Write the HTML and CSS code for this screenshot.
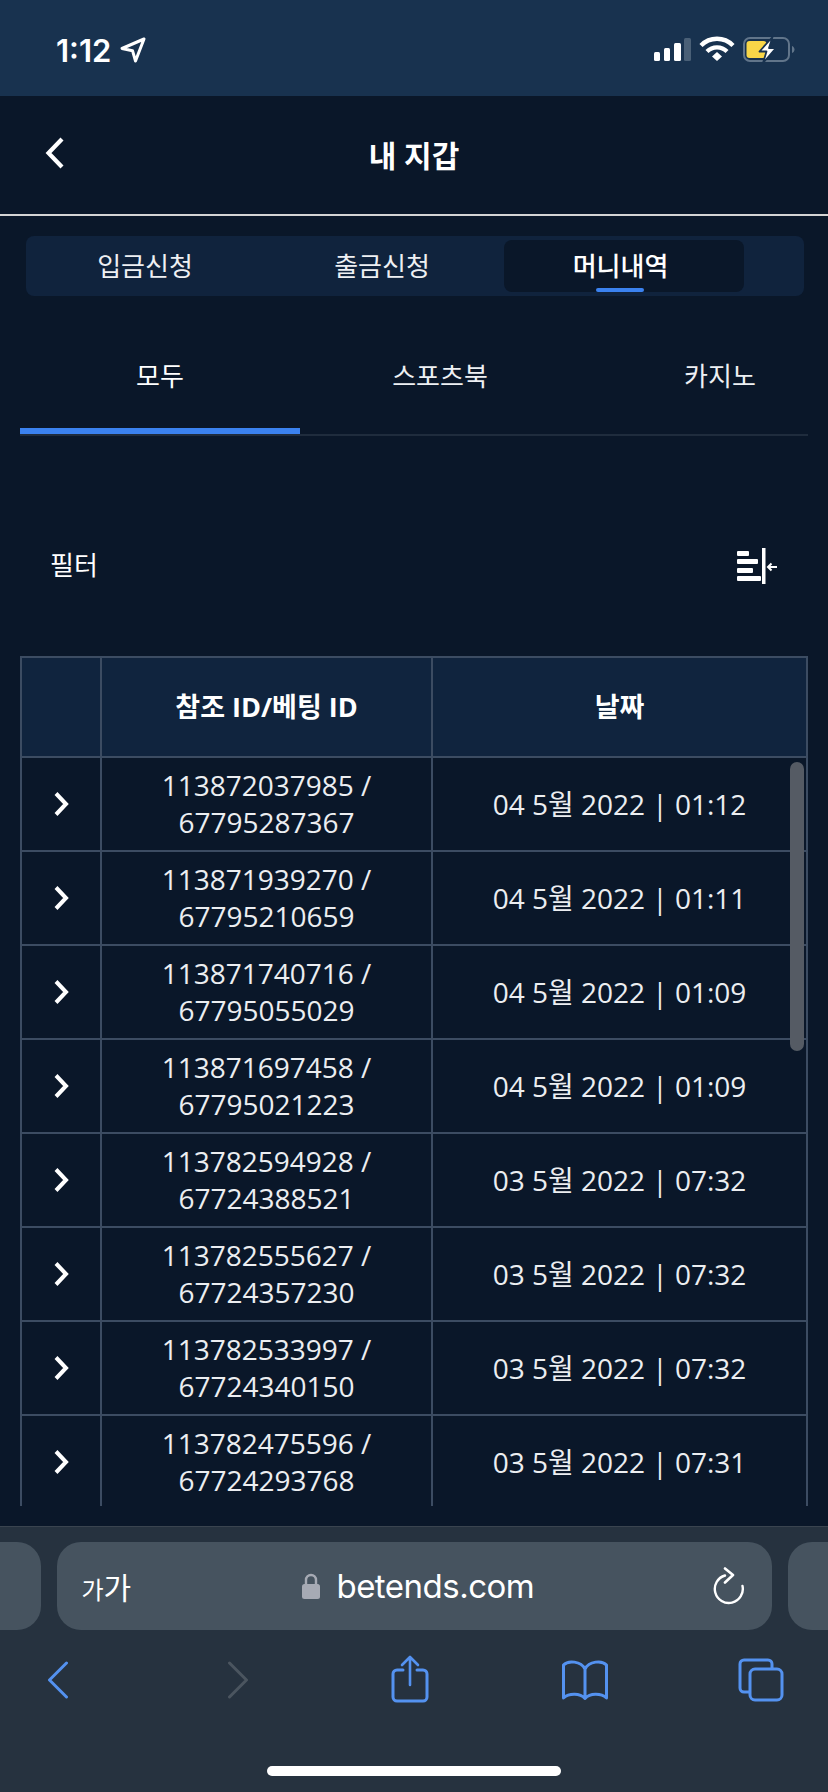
FILE: index.html
```html
<!DOCTYPE html>
<html lang="ko">

<head>
    <meta charset="UTF-8">
    <meta name="viewport" content="width=device-width, initial-scale=1.0">
    <title>내 지갑</title>
    <link rel="stylesheet" href="styles.css">
</head>

<body>
    <div class="statusBar">
        <div class="clock">
            <span>1:12</span>
            <svg class="locArrow" viewBox="0 0 26 26" width="26" height="26">
                <path d="M24 2 2 11.500l10.500 2.200L15.500 24z" fill="none" stroke="#fff" stroke-width="3" stroke-linejoin="round" />
            </svg>
        </div>
        <svg class="statusIcons" viewBox="0 0 142 28" width="142" height="28">
            <rect x="0" y="16" width="6" height="9" rx="1.5" fill="#fff" />
            <rect x="10" y="12" width="6" height="13" rx="1.5" fill="#fff" />
            <rect x="20" y="7" width="7" height="18" rx="1.5" fill="#fff" />
            <rect x="30" y="2" width="7" height="23" rx="1.5" fill="#4a6077" />
            <path d="M47 9.5a22.5 22.5 0 0 1 32 0" fill="none" stroke="#fff" stroke-width="4.4" />
            <path d="M53 15.5a14 14 0 0 1 20 0" fill="none" stroke="#fff" stroke-width="4.2" />
            <path d="M58 20.5 63 16l5 4.5-5 4.5z" fill="#fff" />
            <rect x="90" y="2" width="45" height="23" rx="6" fill="none" stroke="#61758a" stroke-width="2" />
            <path d="M138 10v7c1.500-.5 2.500-2 2.500-3.500S139.500 10.500 138 10z" fill="#61758a" />
            <rect x="92.500" y="5" width="20" height="17" rx="3" fill="#f8d648" />
            <path d="M118.500 1 105.500 15.500h7L109 27l13-15h-7z" fill="#fff" stroke="#18324f" stroke-width="1.800" stroke-linejoin="round" />
        </svg>
    </div>

    <div class="topBar">
        <svg class="backBtn" viewBox="0 0 20 32" width="20" height="32">
            <path d="M17 2 3.500 16 17 30" fill="none" stroke="#fff" stroke-width="4.200" />
        </svg>
        <h1 class="pageTitle">내 지갑</h1>
    </div>

    <ul class="subTabs">
        <li>입금신청</li>
        <li>출금신청</li>
        <li class="current">머니내역</li>
    </ul>

    <ul class="typeTabs">
        <li class="current">모두</li>
        <li>스포츠북</li>
        <li>카지노</li>
    </ul>

    <div class="filterRow">
        <span>필터</span>
        <svg class="filterIcon" viewBox="0 0 40 36" width="40" height="36">
            <rect x="0" y="3" width="12" height="5" rx="1" fill="#fff" />
            <rect x="0" y="11" width="21" height="5" rx="1" fill="#fff" />
            <rect x="0" y="20" width="16" height="5" rx="1" fill="#fff" />
            <rect x="0" y="28" width="24" height="5" rx="1" fill="#fff" />
            <rect x="25" y="0" width="3.500" height="36" fill="#fff" />
            <path d="M31 19h9M34.500 15.500 31 19l3.500 3.500" fill="none" stroke="#fff" stroke-width="2" />
        </svg>
    </div>

    <div class="tableBox">
        <table class="moneyTable">
            <colgroup>
                <col class="colArrow">
                <col class="colId">
                <col class="colDate">
            </colgroup>
            <thead>
                <tr>
                    <th></th>
                    <th>참조 ID/베팅 ID</th>
                    <th>날짜</th>
                </tr>
            </thead>
            <tbody id="rows"></tbody>
        </table>
        <div class="scrollThumb"></div>
    </div>

    <div class="safariBar">
        <div class="urlRow">
            <div class="urlSide"></div>
            <div class="urlPill">
                <span class="textSize"><small>가</small>가</span>
                <span class="urlText">
                    <svg class="lockIcon" viewBox="0 0 18 26" width="18" height="26">
                        <path d="M4 12V7a5 5 0 0 1 10 0v5" fill="none" stroke="#a6aab4" stroke-width="2.400" />
                        <rect x="0" y="11" width="18" height="15" rx="2.500" fill="#a6aab4" />
                    </svg>
                    betends.com
                </span>
                <svg class="reloadIcon" viewBox="0 0 32 38" width="32" height="38">
                    <path d="M12 8.500A14 14 0 1 0 29.500 19" fill="none" stroke="#fff" stroke-width="2.400" stroke-linecap="round" />
                    <path d="M12 1.500 20 8l-8 7.500" fill="none" stroke="#fff" stroke-width="2.600" stroke-linecap="round" stroke-linejoin="round" />
                </svg>
            </div>
            <div class="urlSide"></div>
        </div>
        <div class="toolRow">
            <svg class="navPrev" viewBox="0 0 22 38" width="22" height="38">
                <path d="M19.500 2 2.500 19l17 17" fill="none" stroke="#5492f0" stroke-width="3" stroke-linecap="round" stroke-linejoin="round" />
            </svg>
            <svg class="navNext" viewBox="0 0 22 38" width="22" height="38">
                <path d="M2.500 2l17 17-17 17" fill="none" stroke="#4b555f" stroke-width="3" stroke-linecap="round" stroke-linejoin="round" />
            </svg>
            <svg class="navShare" viewBox="0 0 40 50" width="40" height="50">
                <path d="M13 15H7a4 4 0 0 0-4 4v23a4 4 0 0 0 4 4h26a4 4 0 0 0 4-4V19a4 4 0 0 0-4-4h-6" fill="none" stroke="#5492f0" stroke-width="3" stroke-linecap="round" />
                <path d="M20 30V2M12 10l8-8 8 8" fill="none" stroke="#5492f0" stroke-width="2.600" stroke-linecap="round" stroke-linejoin="round" />
            </svg>
            <svg class="navBook" viewBox="0 0 48 40" width="48" height="40">
                <path d="M24 9C20 1 7 0 2.500 5v33C8 33 19 33 24 38.500 29 33 40 33 45.500 38V5C41 0 28 1 24 9zM24 9v29" fill="none" stroke="#5492f0" stroke-width="3" stroke-linejoin="round" />
            </svg>
            <svg class="navTabs" viewBox="0 0 46 44" width="46" height="44">
                <path d="M11 34H6a4 4 0 0 1-4-4V6a4 4 0 0 1 4-4h24a4 4 0 0 1 4 4v5" fill="none" stroke="#5492f0" stroke-width="3" />
                <rect x="12" y="11" width="32" height="31" rx="5" fill="none" stroke="#5492f0" stroke-width="3" />
            </svg>
        </div>
        <div class="homeBar"></div>
    </div>

    <script>
        var rowData = [
            ["113872037985", "67795287367", "04 5월 2022 | 01:12"],
            ["113871939270", "67795210659", "04 5월 2022 | 01:11"],
            ["113871740716", "67795055029", "04 5월 2022 | 01:09"],
            ["113871697458", "67795021223", "04 5월 2022 | 01:09"],
            ["113782594928", "67724388521", "03 5월 2022 | 07:32"],
            ["113782555627", "67724357230", "03 5월 2022 | 07:32"],
            ["113782533997", "67724340150", "03 5월 2022 | 07:32"],
            ["113782475596", "67724293768", "03 5월 2022 | 07:31"]
        ];
        var rows = document.getElementById("rows");
        var html = "";
        for (let i = 0; i < rowData.length; i++) {
            html += '<tr><td><svg class="rowArrow" viewBox="0 0 16 26" width="16" height="26"><path d="M3 2.500 13 13 3 23.500" fill="none" stroke="#fff" stroke-width="4"/></svg></td>';
            html += "<td>" + rowData[i][0] + " /<br>" + rowData[i][1] + "</td>";
            html += "<td>" + rowData[i][2] + "</td></tr>";
        }
        // one more row, cut off by the box
        html += "<tr><td></td><td></td><td></td></tr>";
        rows.innerHTML = html;
    </script>
</body>

</html>
```

FILE: styles.css
```css
* {
    padding: 0;
    margin: 0;
    box-sizing: border-box;
}

html,
body {
    height: 100%;
}

body {
    width: 828px;
    height: 1792px;
    overflow: hidden;
    display: flex;
    flex-direction: column;
    background-color: #0a1729;
    color: #fff;
    font-family: "Open Sans", "Noto Sans CJK KR", sans-serif;
}

ul {
    list-style: none;
}

/* status bar */
.statusBar {
    height: 96px;
    flex: none;
    display: flex;
    justify-content: space-between;
    align-items: center;
    padding: 4px 32px 0 56px;
    background-color: #18324f;
}

.clock {
    display: flex;
    align-items: center;
    gap: 9px;
    font-family: Inter, sans-serif;
    font-size: 31px;
    font-weight: 600;
}

.statusIcons {
    display: block;
}

/* title */
.topBar {
    height: 120px;
    flex: none;
    display: flex;
    align-items: center;
    justify-content: center;
    position: relative;
    border-bottom: 2px solid #d4d4d4;
}

.backBtn {
    position: absolute;
    left: 45px;
    top: 41px;
}

.pageTitle {
    font-size: 30px;
    font-weight: 700;
    margin-bottom: 2px;
}

/* 입금 / 출금 / 머니 */
.subTabs {
    height: 60px;
    flex: none;
    margin: 20px 24px 0 26px;
    padding: 4px 60px 4px 4px;
    display: grid;
    grid-template-columns: 237px 237px 240px;
    background-color: #10233d;
    border-radius: 8px;
    font-size: 26px;
}

.subTabs>li {
    display: flex;
    align-items: center;
    justify-content: center;
    position: relative;
    padding: 0 7px 3px 0;
    color: #eef0f3;
    border-radius: 8px;
}

.subTabs>li.current {
    background-color: #0a1729;
    color: #fff;
    font-weight: 500;
}

.subTabs>li.current::after {
    content: "";
    position: absolute;
    bottom: 0;
    left: 92px;
    width: 48px;
    height: 4px;
    background-color: #3b82f0;
    border-radius: 2px;
}

.typeTabs {
    height: 100px;
    flex: none;
    margin: 40px 20px 0;
    display: flex;
    overflow: hidden;
    border-bottom: 2px solid #1f2c3d;
    font-size: 26px;
}

.typeTabs>li {
    width: 280px;
    flex: none;
    text-align: center;
    padding-top: 20px;
    color: #eef0f3;
}

.typeTabs>li.current {
    border-bottom: 6px solid #3b82f0;
    color: #fff;
}

.filterRow {
    height: 180px;
    flex: none;
    margin-top: 40px;
    padding: 0 51px 0 50px;
    display: flex;
    justify-content: space-between;
    align-items: center;
    font-size: 26px;
}

.filterRow>span {
    margin-bottom: 4px;
}

/* table */
.tableBox {
    height: 850px;
    flex: none;
    margin: 0 20px;
    position: relative;
    overflow: hidden;
}

.moneyTable {
    width: 788px;
    table-layout: fixed;
    border-collapse: separate;
    border-spacing: 0;
    text-align: center;
    font-size: 28px;
    color: #eceef1;
}

.colArrow {
    width: 80px;
}

.colId {
    width: 331px;
}

.colDate {
    width: 377px;
}

.moneyTable th,
.moneyTable td {
    border-top: 2px solid #3c4c62;
    border-left: 2px solid #3c4c62;
    vertical-align: middle;
}

.moneyTable th:last-child,
.moneyTable td:last-child {
    border-right: 2px solid #3c4c62;
}

.moneyTable th {
    height: 100px;
    background-color: #10243e;
    color: #fff;
    font-size: 27px;
    font-weight: 700;
    padding-bottom: 4px;
}

.moneyTable td {
    height: 94px;
    line-height: 37px;
}

.rowArrow {
    display: block;
    margin: 0 auto;
}

.scrollThumb {
    position: absolute;
    top: 106px;
    right: 4px;
    width: 14px;
    height: 289px;
    background-color: #555b64;
    border-radius: 7px;
}

/* browser bar */
.safariBar {
    flex: 1;
    margin-top: 20px;
    border-top: 1px solid #3a444f;
    background-color: #26323f;
    padding-top: 15px;
}

.urlRow {
    display: flex;
    justify-content: center;
    gap: 16px;
    overflow: hidden;
}

.urlSide {
    width: 100px;
    height: 88px;
    flex: none;
    background-color: #46535f;
    border-radius: 24px;
}

.urlPill {
    width: 715px;
    height: 88px;
    flex: none;
    padding: 0 26px 0 25px;
    display: flex;
    justify-content: space-between;
    align-items: center;
    background-color: #46535f;
    border-radius: 24px;
}

.textSize {
    font-size: 30px;
    font-family: "Noto Sans CJK KR", sans-serif;
    line-height: 1;
}

.textSize small {
    font-size: 24px;
}

.urlText {
    display: flex;
    align-items: center;
    gap: 16px;
    margin-right: 8px;
    font-family: Inter, sans-serif;
    font-size: 33px;
    letter-spacing: -0.5px;
}

.toolRow {
    height: 100px;
    padding: 0 0 0 47px;
    display: flex;
    align-items: center;
}

.navNext {
    margin-left: 158px;
}

.navShare {
    margin-left: 141px;
    margin-bottom: 1px;
}

.navBook {
    margin-left: 131px;
}

.navTabs {
    margin-left: 129px;
}

.homeBar {
    width: 294px;
    height: 10px;
    margin: 36px auto 0;
    background-color: #fff;
    border-radius: 5px;
}
```
